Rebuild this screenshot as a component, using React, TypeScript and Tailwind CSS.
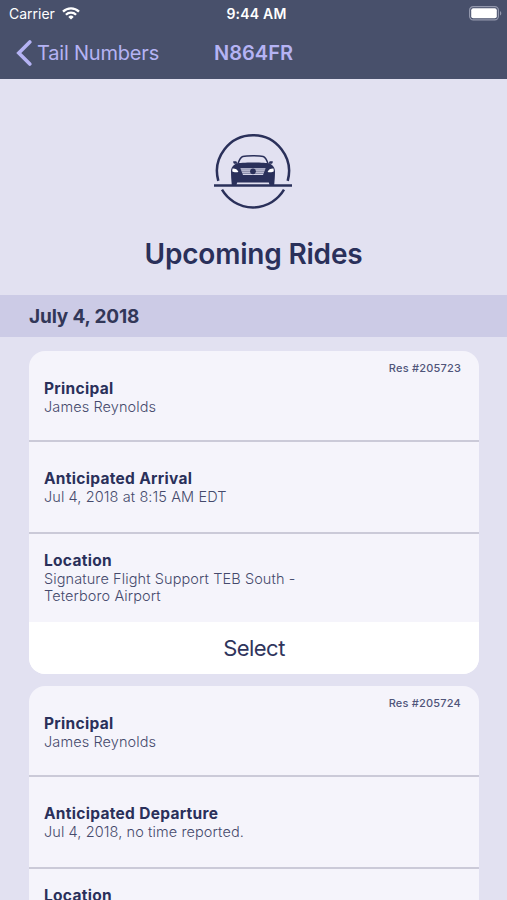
const RIDES = [
  {
    reservation: '205723',
    fields: [
      { label: 'Principal', value: 'James Reynolds' },
      { label: 'Anticipated Arrival', value: 'Jul 4, 2018 at 8:15 AM EDT' },
      { label: 'Location', value: 'Signature Flight Support TEB South - Teterboro Airport' },
    ],
  },
  {
    reservation: '205724',
    fields: [
      { label: 'Principal', value: 'James Reynolds' },
      { label: 'Anticipated Departure', value: 'Jul 4, 2018, no time reported.' },
      { label: 'Location', value: 'Signature Flight Support TEB South - Teterboro Airport' },
    ],
  },
]

// height and top padding of the three card rows
const ROW_CLASSES = [
  'h-[91px] pt-[28px] border-b-2 border-[#cbcad8]',
  'h-[92px] pt-[27px] border-b-2 border-[#cbcad8]',
  'h-[88px] pt-[17px]',
]

function WifiIcon() {
  return (
    <svg width="18" height="13" viewBox="0 0 18 13" fill="none" stroke="#fff" strokeWidth="2.3">
      <path d="M1 4.6a11.4 11.4 0 0 1 16 0" />
      <path d="M3.9 7.8a7.3 7.3 0 0 1 10.2 0" />
      <path d="M9 12.6 6.3 9.9a3.9 3.9 0 0 1 5.4 0Z" fill="#fff" stroke="none" />
    </svg>
  )
}

function BatteryIcon() {
  return (
    <svg width="33" height="15" viewBox="0 0 33 15" fill="none">
      <rect x="0.6" y="0.6" width="28.8" height="13.3" rx="3.6" stroke="#9398ad" strokeWidth="1.2" />
      <rect x="2.2" y="2.2" width="25.6" height="10.1" rx="2" fill="#fff" />
      <path d="M31 5v4.6c1.8-.8 1.8-3.8 0-4.6Z" fill="#9398ad" />
    </svg>
  )
}

function CarLogo() {
  return (
    <svg className="-ml-px" width="80" height="76" viewBox="0 0 80 76" fill="none">
      <g stroke="#2a305a" strokeWidth="2.5">
        <path d="M5.3 47.8A36 36 0 1 1 74.7 47.8" />
        <path d="M9 56.7A36 36 0 0 0 71 56.7" />
        <path d="M1 52.4h78" />
      </g>
      <path d="M25 30.5c1.4-4 2.6-6.4 4.8-7 4-1 16.4-1 20.4 0 2.2.6 3.4 3 4.8 7" stroke="#2a305a" strokeWidth="1.5" />
      <path
        d="M23.5 30.6c4-1.4 29-1.4 33 0 3 1.4 5.5 4 5.5 8 0 4.6-.3 8.4-.8 13.4h-4.6l-.8-2.6H24.2l-.8 2.6h-4.6c-.5-5-.8-8.8-.8-13.4 0-4 2.5-6.6 5.500-8Z"
        fill="#2a305a"
      />
      <path d="M20.3 28.3h3l1.2 2.4h-3.4c-.8-.6-1-1.6-.8-2.4ZM59.7 28.3h-3l-1.2 2.4h3.4c.8-.6 1-1.6.8-2.4Z" fill="#2a305a" />
      <path d="M27.4 35.2h25.2l-2.6 6.8H30Z" fill="#d5d5e8" />
      <path d="M27.8 36.9h24.4M28.4 38.7h23.2M29.2 40.4h21.6" stroke="#2a305a" strokeWidth="0.5" />
      <circle cx="40" cy="38.3" r="2.9" fill="#2a305a" />
      <path d="M19.5 35.4c2.6-.2 5 .8 5.9 3.5-2.4.6-5 .3-6.2-.7ZM60.5 35.4c-2.6-.2-5 .8-5.9 3.5 2.4.6 5 .3 6.2-.7Z" fill="#fff" />
    </svg>
  )
}

function RideCard({ ride }: { ride: (typeof RIDES)[number] }) {
  return (
    <article className="relative overflow-hidden rounded-[16px] bg-[#f5f4fb]">
      <span className="absolute right-[18px] top-[10px] text-[11px] leading-[14px] font-medium tracking-[0.2px] text-[#50557a]">
        Res #{ride.reservation}
      </span>
      {ride.fields.map(({ label, value }, i) => (
        <div key={label} className={`px-[15px] ${ROW_CLASSES[i]}`}>
          <h3 className="text-[15.5px] leading-[19px] font-bold tracking-[0.3px] text-[#2a305a]">{label}</h3>
          <p className="w-[270px] text-[14.5px] leading-[17px] font-light tracking-[0.1px] text-[#454a6c]">{value}</p>
        </div>
      ))}
      <button className="block h-[52px] w-full bg-white text-[22px] tracking-[-0.55px] text-[#2f355c]">Select</button>
    </article>
  )
}

export default function App() {
  return (
    <div className="h-[900px] w-full overflow-hidden bg-[#e2e1f1] font-['Inter','Liberation_Sans',sans-serif]">
      <header className="h-[79px] bg-[#48506b]">
        <div className="grid h-[27px] grid-cols-3 items-center pl-[9px] pr-[5px] text-[14px] text-white">
          <div className="flex items-center gap-[7px]">
            <span>Carrier</span>
            <WifiIcon />
          </div>
          <span className="pl-[2px] text-center font-semibold tracking-[0.2px]">9:44 AM</span>
          <div className="flex justify-end">
            <BatteryIcon />
          </div>
        </div>
        <nav className="grid h-[51px] grid-cols-3 items-center pl-[16px] pr-[16px] text-[20px] text-[#b5b3f4]">
          <button className="flex items-center gap-[5px] whitespace-nowrap tracking-[-0.2px]">
            <svg width="16" height="26" viewBox="0 0 16 26" fill="none" stroke="currentColor" strokeWidth="3.6" strokeLinecap="round">
              <path d="M13.8 2 2.8 13l11 11" />
            </svg>
            Tail Numbers
          </button>
          <span className="text-center font-semibold">N864FR</span>
        </nav>
      </header>

      <section className="flex h-[216px] flex-col items-center pt-[54px]">
        <CarLogo />
        <h1 className="mt-[27px] text-[28px] leading-[36px] font-semibold tracking-[-0.2px] text-[#2a305a]">
          Upcoming Rides
        </h1>
      </section>

      <h2 className="flex h-[42px] items-center bg-[#cccbe6] pl-[29px] pt-[2px] text-[19px] font-bold tracking-[-0.15px] text-[#323758]">
        July 4, 2018
      </h2>

      <main className="space-y-3 pl-[29px] pr-[28px] pt-[14px]">
        {RIDES.map((ride) => (
          <RideCard key={ride.reservation} ride={ride} />
        ))}
      </main>
    </div>
  )
}
